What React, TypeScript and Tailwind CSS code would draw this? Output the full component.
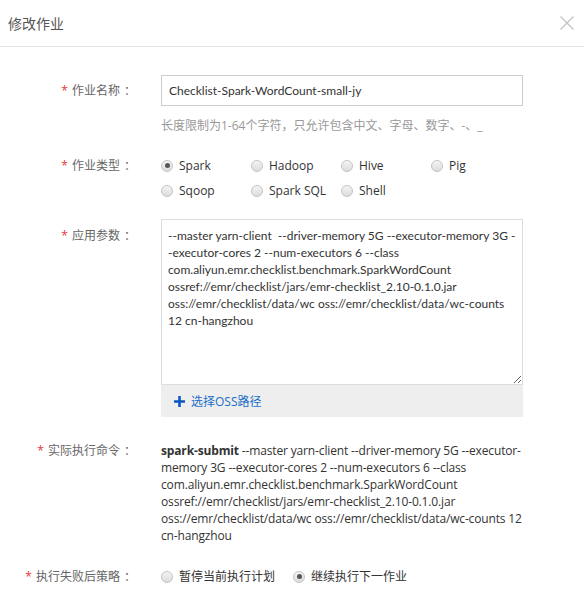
const cjk = "font-['Open_Sans','Noto_Sans_CJK_SC',sans-serif]";

const argsText = [
  "--master yarn-client  --driver-memory 5G --executor-memory 3G -",
  "-executor-cores 2 --num-executors 6 --class",
  "com.aliyun.emr.checklist.benchmark.SparkWordCount",
  "ossref://emr/checklist/jars/emr-checklist_2.10-0.1.0.jar",
  "oss://emr/checklist/data/wc oss://emr/checklist/data/wc-counts",
  "12 cn-hangzhou",
].join("\n");

const commandLines = [
  "--master yarn-client --driver-memory 5G --executor-",
  "memory 3G --executor-cores 2 --num-executors 6 --class",
  "com.aliyun.emr.checklist.benchmark.SparkWordCount",
  "ossref://emr/checklist/jars/emr-checklist_2.10-0.1.0.jar",
  "oss://emr/checklist/data/wc oss://emr/checklist/data/wc-counts 12",
  "cn-hangzhou",
];

function Radio({ checked, label }: { checked?: boolean; label: string }) {
  return (
    <label className="flex items-center gap-[6px]">
      <span className="flex size-[12px] items-center justify-center rounded-full border border-[#c4c4c4] bg-[linear-gradient(#f4f4f4,#dcdcdc)]">
        {checked && <span className="size-[5px] rounded-full bg-[#555]" />}
      </span>
      <span>{label}</span>
    </label>
  );
}

function Label({ children }: { children: string }) {
  return (
    <div className="w-[161px] shrink-0 pr-[25px] text-right text-[#666]">
      <span className="mr-[4px] text-[#e4393c]">*</span>
      {children}
      <span className="ml-[4px]">：</span>
    </div>
  );
}

export default function App() {
  return (
    <div className={`w-[584px] h-[614px] bg-white text-[12px] leading-[17px] text-[#333] ${cjk}`}>
      <div className="flex h-[47px] items-center justify-between border-b border-[#e5e5e5] pl-[8px] pr-[10px]">
        <span className="text-[14px] text-[#555]">修改作业</span>
        <svg viewBox="0 0 14 14" className="size-[14px]">
          <path d="M0.5 0.5l13 13M13.5 0.5l-13 13" stroke="#c2c2c2" strokeWidth="1.3" fill="none" />
        </svg>
      </div>

      <div className="flex items-center pt-[28px]">
        <Label>作业名称</Label>
        <div className="flex h-[31px] w-[362px] items-center border border-[#ccc] px-[7px] font-['Lato',sans-serif]">
          Checklist-Spark-WordCount-small-jy
        </div>
      </div>
      <div className="ml-[161px] mt-[11px] text-[#999]">
        长度限制为1-64个字符，只允许包含中文、字母、数字、-、_
      </div>

      <div className="mt-[23px] flex">
        <Label>作业类型</Label>
        <div className="grid grid-cols-[90px_90px_90px_90px] gap-y-[8px]">
          <Radio checked label="Spark" />
          <Radio label="Hadoop" />
          <Radio label="Hive" />
          <Radio label="Pig" />
          <Radio label="Sqoop" />
          <Radio label="Spark SQL" />
          <Radio label="Shell" />
        </div>
      </div>

      <div className="mt-[20px] flex">
        <div className="pt-[8px]">
          <Label>应用参数</Label>
        </div>
        <div className="w-[362px]">
          <textarea
            readOnly
            wrap="off"
            defaultValue={argsText}
            className="block h-[166px] w-full resize-y overflow-hidden border border-[#ddd] px-[6px] py-[7px] font-['Lato',sans-serif] text-[12px] leading-[17px] text-[#333] outline-none"
          />
          <div className="flex h-[32px] items-center gap-[6px] bg-[#eee] pl-[13px] text-[#1a6ec8]">
            <svg viewBox="0 0 12 12" className="size-[11px]">
              <path d="M4.6 0h2.8v4.6H12v2.8H7.4V12H4.6V7.4H0V4.6h4.6z" fill="#0a56c2" />
            </svg>
            <span>选择OSS路径</span>
          </div>
        </div>
      </div>

      <div className="mt-[25px] flex">
        <Label>实际执行命令</Label>
        <div className="w-[362px] tracking-[-0.15px]">
          {commandLines.map((line, i) => (
            <div key={i} className="whitespace-nowrap">
              {i === 0 && <span className="font-bold">spark-submit </span>}
              {line}
            </div>
          ))}
        </div>
      </div>

      <div className="mt-[24px] flex">
        <Label>执行失败后策略</Label>
        <div className="flex gap-[18px]">
          <Radio label="暂停当前执行计划" />
          <Radio checked label="继续执行下一作业" />
        </div>
      </div>
    </div>
  );
}
